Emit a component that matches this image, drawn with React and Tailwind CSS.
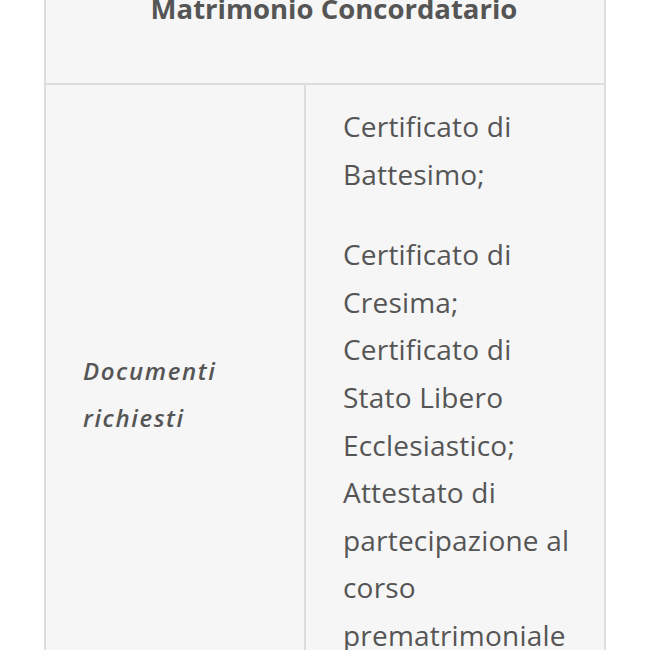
import React from 'react'

const documents = [
  ['Certificato di', 'Battesimo;'],
  ['Certificato di', 'Cresima;', 'Certificato di', 'Stato Libero', 'Ecclesiastico;', 'Attestato di', 'partecipazione al', 'corso', 'prematrimoniale'],
]

const App = () => {
  return (
    <div className="min-h-screen bg-white overflow-hidden font-['Open_Sans',sans-serif] text-[#555555]">
      <div className="mx-[44px] -mt-[33px] w-[562px] border-x-2 border-t-2 border-[#dddddd] bg-[#f6f6f6]">
        {/* header row */}
        <div className="pt-[16px] pb-[50px] pl-[18px] text-center text-[27.5px] leading-[48px] font-bold">
          Matrimonio Concordatario
        </div>

        <div className="grid grid-cols-[260px_1fr] border-t-2 border-[#dddddd]">
          <div className="flex items-center px-[37px] border-r-2 border-[#dddddd]">
            <p className="text-[24px] leading-[47px] font-semibold italic tracking-[1.6px]">
              Documenti
              <br />
              richiesti
            </p>
          </div>
          <div className="pl-[37px] pr-[20px] pt-[18px] pb-[10px]">
            {documents.map((lines, i) => (
              <p key={i} className="mb-[33px] text-[28px] leading-[47.6px] tracking-[0.2px] whitespace-nowrap">
                {lines.map((line, j) => (
                  <React.Fragment key={j}>
                    {line}
                    {j < lines.length - 1 && <br />}
                  </React.Fragment>
                ))}
              </p>
            ))}
          </div>
        </div>
      </div>
    </div>
  )
}

export default App
